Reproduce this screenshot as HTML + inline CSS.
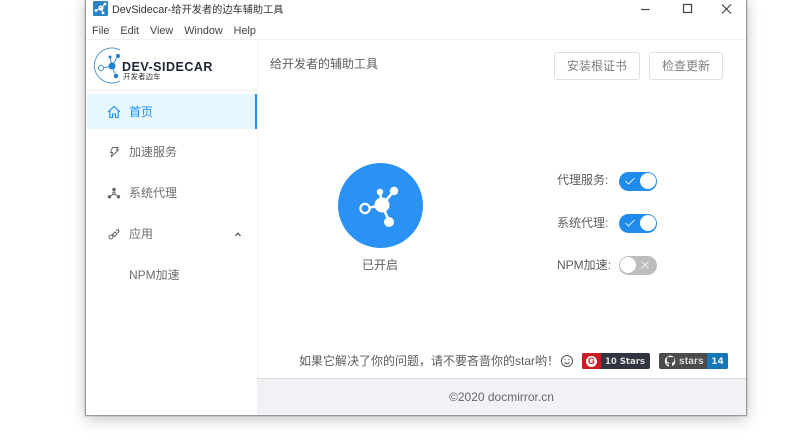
<!DOCTYPE html>
<html><head><meta charset="utf-8"><style>
*{box-sizing:border-box}
html,body{margin:0;padding:0;width:800px;height:448px;overflow:hidden;background:#fff;font-family:"Liberation Sans","Noto Sans CJK SC",sans-serif}
.a{position:absolute;white-space:nowrap}
#win{position:absolute;left:86px;top:-2px;width:660px;height:417px;background:#fff;box-shadow:0 0 1px 1px #8a8a8a,0 3px 14px rgba(0,0,0,.28)}
.nav{font-size:12px;color:#6e6e6e;line-height:16px}
.tg{position:absolute;width:38px;height:19px;border-radius:10px;background:#1f8ceb}
.tg i{position:absolute;top:1.5px;width:16px;height:16px;border-radius:50%;background:#fff;display:block}
.lb{font-size:12px;color:#5c5c5c;line-height:16px}
.btn{position:absolute;top:52px;height:28px;border:1px solid #e0e0e0;border-radius:3px;background:#fff;color:#808080;font-size:12px;line-height:26px;text-align:center}
</style></head><body>
<div id="win"></div>
<!-- title bar -->
<svg class="a" style="left:93px;top:1px" width="15" height="15" viewBox="0 0 15 15"><rect width="15" height="15" rx="1" fill="#2b83c4"/><circle cx="8" cy="7" r="2.6" fill="#fff"/><circle cx="3" cy="9.5" r="1.4" fill="#fff"/><circle cx="12" cy="3" r="1.4" fill="#fff"/><circle cx="10" cy="12" r="1.4" fill="#fff"/><path d="M3 9.5L8 7L12 3M8 7L10 12" stroke="#fff"/></svg>
<div class="a" style="left:112px;top:2px;font-size:10.200px;line-height:16px;color:#333"><span style="font-size:10.800px">DevSidecar-</span>给开发者的边车辅助工具</div>
<svg class="a" style="left:640px;top:3px" width="100" height="12" viewBox="0 0 100 12" fill="none" stroke="#444" stroke-width="1.2"><path d="M1 6.5H9.5"/><rect x="43.500" y="1.500" width="8" height="8"/><path d="M82 1.5L91 10.5M91 1.5L82 10.5"/></svg>
<div class="a" style="left:92px;top:24px;font-size:10.800px;line-height:15px;color:#444"><span>File</span><span style="margin-left:11px">Edit</span><span style="margin-left:11px">View</span><span style="margin-left:11px">Window</span><span style="margin-left:11px">Help</span></div>
<!-- header -->
<div class="a" style="left:86px;top:39px;width:660px;height:1px;background:#efefef"></div>
<div class="a" style="left:257px;top:40px;width:1px;height:338px;background:#f0f0f0"></div>
<div class="a" style="left:86px;top:90px;width:171px;height:1px;background:#f0f0f0"></div>
<svg class="a" style="left:93px;top:46px" width="46" height="40" viewBox="0 0 46 40" fill="none"><path d="M27 4A17.500 17.500 0 1 0 27 35" stroke="#5a9bc4" stroke-width="1"/><circle cx="8" cy="22" r="2.500" stroke="#3b8fd0"/><path d="M10.500 22L19 20M19 20L17 11M19 20L25 10M19 20L23 30" stroke="#3b8fd0"/><circle cx="19" cy="20" r="3.500" fill="#1f7fd0"/><circle cx="17" cy="11" r="1.500" fill="#1f7fd0"/><circle cx="25" cy="10" r="2" fill="#1f7fd0"/><circle cx="23" cy="30" r="2.200" fill="#1f7fd0"/></svg>
<div class="a" style="left:122px;top:60px;font-size:12.500px;font-weight:bold;line-height:15px;color:#1d2533;letter-spacing:.5px">DEV-SIDECAR</div>
<div class="a" style="left:123px;top:72px;font-size:7.500px;line-height:9px;color:#333">开发者边车</div>
<div class="a" style="left:270px;top:56px;font-size:12px;line-height:16px;color:#5c5c5c">给开发者的辅助工具</div>
<div class="btn" style="left:554px;width:86px">安装根证书</div>
<div class="btn" style="left:649px;width:74px">检查更新</div>
<!-- sidebar -->
<div class="a" style="left:87px;top:94px;width:170px;height:35px;background:#e6f7ff"></div>
<div class="a" style="left:255px;top:94px;width:2px;height:35px;background:#2a8fe0"></div>
<svg class="a" style="left:107px;top:105px" width="14" height="14" viewBox="0 0 14 14" fill="none" stroke="#1f8ceb" stroke-width="1.100"><path d="M1 7L7 1.500L13 7M2.800 6V12.500H5.500V9H8.500V12.500H11.200V6"/></svg>
<div class="a nav" style="left:129px;top:104px;color:#1890ff">首页</div>
<svg class="a" style="left:108px;top:146px" width="12" height="12" viewBox="0 0 12 12" fill="none" stroke="#666" stroke-width="1"><path d="M4.500 1.500H10L8.500 4H10.500L3 11L4.500 6.500H2.500Z"/></svg>
<div class="a nav" style="left:129px;top:144px">加速服务</div>
<svg class="a" style="left:107px;top:186px" width="14" height="14" viewBox="0 0 14 14" fill="none" stroke="#666" stroke-width="1"><path d="M7 4L7 7.500L3 10.500M7 7.500L11 10.500"/><circle cx="7" cy="3.500" r="1.300" fill="#666"/><circle cx="2.500" cy="10.800" r="1.200" fill="#666"/><circle cx="11.500" cy="10.800" r="1.200" fill="#666"/><circle cx="7" cy="7.500" r="1.200" fill="#fff"/></svg>
<div class="a nav" style="left:129px;top:185px">系统代理</div>
<svg class="a" style="left:108px;top:228px" width="12" height="12" viewBox="0 0 12 12" fill="none" stroke="#666" stroke-width="1"><circle cx="3" cy="9" r="2"/><path d="M4.500 6.500L7 4L9 6L6.500 8.500Z"/><path d="M8 2.500L10.500 1.500L11 3.500L9.500 5"/></svg>
<div class="a nav" style="left:129px;top:226px">应用</div>
<svg class="a" style="left:235px;top:232px" width="6" height="5" viewBox="0 0 6 5"><path d="M.5 4L3 1.200L5.500 4" fill="none" stroke="#555" stroke-width="1.300"/></svg>
<div class="a nav" style="left:129px;top:267px">NPM加速</div>
<!-- main -->
<div class="a" style="left:338px;top:163px;width:85px;height:85px;border-radius:50%;background:#2a92f4"></div>
<svg class="a" style="left:338px;top:163px" width="85" height="85" viewBox="0 0 85 85" fill="none"><path d="M32 44.500L44 42M44 42L42 29M44 42L56 28M44 42L51 58" stroke="#fff" stroke-width="2.500"/><circle cx="44" cy="42" r="7.500" fill="#fff"/><circle cx="42" cy="29" r="3.200" fill="#fff"/><circle cx="56" cy="28" r="4.200" fill="#fff"/><circle cx="51" cy="59" r="5" fill="#fff"/><circle cx="27" cy="45.500" r="4.600" stroke="#fff" stroke-width="2.200"/></svg>
<div class="a" style="left:362px;top:257px;font-size:12px;line-height:16px;color:#5c5c5c">已开启</div>
<div class="a lb" style="left:557px;top:172px">代理服务:</div>
<div class="tg" style="left:618.500px;top:171.500px"><i style="left:21px"></i></div>
<svg class="a" style="left:624px;top:176px" width="12" height="10" viewBox="0 0 12 10"><path d="M1.500 5L4.500 8L10.500 2" fill="none" stroke="#cfe8ff" stroke-width="1.100"/></svg>
<div class="a lb" style="left:557px;top:215px">系统代理:</div>
<div class="tg" style="left:618.500px;top:213.500px"><i style="left:21px"></i></div>
<svg class="a" style="left:624px;top:218px" width="12" height="10" viewBox="0 0 12 10"><path d="M1.500 5L4.500 8L10.500 2" fill="none" stroke="#cfe8ff" stroke-width="1.100"/></svg>
<div class="a lb" style="left:557px;top:257px">NPM加速:</div>
<div class="tg" style="left:618.500px;top:255.500px;background:#bdbdbd"><i style="left:1.500px"></i></div>
<svg class="a" style="left:640px;top:260px" width="10" height="10" viewBox="0 0 10 10"><path d="M1.500 1.500L8.500 8.500M8.500 1.500L1.500 8.500" stroke="#eee" stroke-width="1.100"/></svg>
<div class="a" style="left:299px;top:353px;font-size:12px;line-height:16px;color:#5c5c5c">如果它解决了你的问题&#xFF0C;请不要吝啬你的star哟&#xFF01;</div>
<svg class="a" style="left:560px;top:354px" width="14" height="14" viewBox="0 0 14 14" fill="none" stroke="#555"><circle cx="7" cy="7" r="5.500"/><path d="M4.500 8.500Q7 11 9.500 8.500"/><path d="M4.500 5.500H5.500M8.500 5.500H9.500"/></svg>
<div class="a" style="left:582px;top:353px;width:68px;height:16px;border-radius:2px;background:#2f3642;overflow:hidden"><div style="position:absolute;left:0;top:0;width:19px;height:16px;background:#c71d23"></div><div style="position:absolute;left:4px;top:2.500px;width:11px;height:11px;border-radius:50%;background:#fff;color:#c71d23;font:bold 9px/11px 'Liberation Sans';text-align:center">G</div><div style="position:absolute;left:23px;top:1px;font:bold 8.500px/16px 'DejaVu Sans',sans-serif;color:#ddd">10 Stars</div></div>
<div class="a" style="left:659px;top:353px;width:69px;height:16px;border-radius:2px;background:#4c4c4c;overflow:hidden"><div style="position:absolute;left:48px;top:0;width:21px;height:16px;background:#1577b8"></div><svg style="position:absolute;left:5px;top:1.500px" width="13" height="13" viewBox="0 0 12 13"><path d="M6 .5a5.700 5.700 0 0 0-1.800 11.100c.3 0 .4-.1.400-.3v-1.500c-1.600.3-2-.4-2.100-.9-.1-.2-.4-.7-.6-.8s-.5-.5 0-.5c.5 0 .9.500 1 .6.500 1 1.500.7 1.800.5.100-.4.200-.7.400-.8-1.400-.2-2.900-.7-2.900-3 0-.7.200-1.200.6-1.600-.1-.2-.3-.8.100-1.600 0 0 .5-.2 1.700.6a5.700 5.700 0 0 1 3 0c1.200-.8 1.700-.6 1.700-.6.300.8.100 1.400.1 1.600.4.400.6 1 .6 1.600 0 2.300-1.400 2.800-2.800 3 .2.200.4.600.4 1.100v1.700c0 .2.100.3.400.3A5.700 5.700 0 0 0 6 .5Z" fill="#fff"/></svg><div style="position:absolute;left:20px;top:1px;font:bold 10px/16px 'Liberation Sans',sans-serif;color:#ddd;letter-spacing:.2px">stars</div><div style="position:absolute;left:48px;width:21px;top:1px;text-align:center;font:bold 9px/16px 'DejaVu Sans',sans-serif;color:#e8f4ff">14</div></div>
<!-- footer -->
<div class="a" style="left:257px;top:378px;width:489px;height:37px;background:#f0f2f5;border-top:1px solid #dcdcdc"></div>
<div class="a" style="left:449px;top:389px;font-size:12px;line-height:16px;color:#666">©2020 docmirror.cn</div>
</body></html>
